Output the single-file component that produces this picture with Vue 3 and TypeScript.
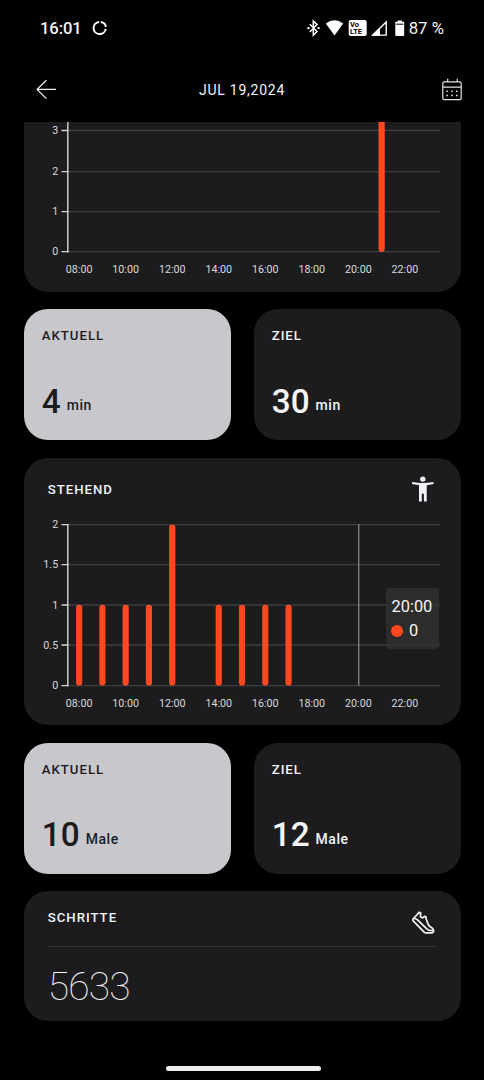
<script setup lang="ts">
interface Tick { label: string; y: number }
interface Bar { slot: number; top: number }
interface Plot { ticks: Tick[]; bars: Bar[]; axisTop: number; base: number; labelY: number }
interface Stat { label: string; value: string; unit: string; light: boolean }

const plotLeft = 43.8
const plotRight = 416
const slotWidth = 23.27

const slotX = (slot: number): number => plotLeft + slotWidth * (slot + 0.5) - 0.3

const hours: string[] = ['08:00', '10:00', '12:00', '14:00', '16:00', '18:00', '20:00', '22:00']

const training: Plot = {
  ticks: [
    { label: '3', y: 8.5 },
    { label: '2', y: 49.6 },
    { label: '1', y: 89.6 },
    { label: '0', y: 129.6 },
  ],
  bars: [{ slot: 13, top: -20 }],
  axisTop: -10,
  base: 130,
  labelY: 151.1,
}

const standing: Plot = {
  ticks: [
    { label: '2', y: 66.6 },
    { label: '1.5', y: 106.6 },
    { label: '1', y: 147 },
    { label: '0.5', y: 187 },
    { label: '0', y: 227.6 },
  ],
  bars: [
    { slot: 0, top: 146.8 },
    { slot: 1, top: 146.8 },
    { slot: 2, top: 146.8 },
    { slot: 3, top: 146.8 },
    { slot: 4, top: 66.4 },
    { slot: 6, top: 146.8 },
    { slot: 7, top: 146.8 },
    { slot: 8, top: 146.8 },
    { slot: 9, top: 146.8 },
  ],
  axisTop: 66,
  base: 227.6,
  labelY: 249,
}

const minutes: Stat[] = [
  { label: 'AKTUELL', value: '4', unit: 'min', light: true },
  { label: 'ZIEL', value: '30', unit: 'min', light: false },
]
const times: Stat[] = [
  { label: 'AKTUELL', value: '10', unit: 'Male', light: true },
  { label: 'ZIEL', value: '12', unit: 'Male', light: false },
]

const sections = [
  { id: 'training', title: '', plot: training, height: 169.5, stats: minutes },
  { id: 'standing', title: 'STEHEND', plot: standing, height: 267.5, stats: times },
]
</script>

<template>
  <div class="screen">
    <div class="status">
      <span class="clock">16:01</span>
      <svg class="ring" width="16" height="16" viewBox="0 0 16 16" fill="none" stroke="#fff" stroke-width="2">
        <path d="M8.8 1.9A6 6 0 0 1 13.9 6.9M13.7 8.9A6.1 6.1 0 1 1 7.2 1.9" />
      </svg>
      <svg class="system" width="100" height="18" viewBox="306 19 100 18">
        <path d="M309.8 24.2l7.2 7.4-3.7 3.6V21l3.7 3.6-7.2 7.4" fill="none" stroke="#fff" stroke-width="1.5" />
        <circle cx="308.4" cy="28.1" r="1.2" fill="#fff" />
        <circle cx="318.6" cy="28.1" r="1.2" fill="#fff" />
        <path d="M325.8 23.4Q334.5 17 343.2 23.4L334.5 35.4Z" fill="#fff" />
        <rect x="348.7" y="20" width="18" height="15.9" rx="2" fill="#fff" />
        <text x="350" y="27" class="volte">Vo</text>
        <text x="350" y="34" class="volte">LTE</text>
        <path d="M373 35.1L386.2 21.9V35.1Z" fill="none" stroke="#fff" stroke-width="1.4" />
        <path d="M371.3 35.8L380 27.2V35.8Z" fill="#fff" />
        <path d="M397.6 20.4h4.4v1.4h2.2v13.2q0 .9-.9.9h-7.1q-.9 0-.9-.9V21.8h2.3z" fill="#fff" />
        <path d="M396.2 24.2h7.2" stroke="#000" stroke-width="1" />
      </svg>
      <span class="battery">87 %</span>
    </div>

    <header class="topbar">
      <svg width="22" height="22" viewBox="0 0 22 22" fill="none" stroke="#f2f2f2" stroke-width="1.3">
        <path d="M11.4 1.2L2 10.4l9.4 9.2M2 10.4h19" stroke-linejoin="round" />
      </svg>
      <h1>JUL 19,2024</h1>
      <svg width="20" height="23" viewBox="0 0 20 23" fill="none" stroke="#e4e4e4" stroke-width="1.2">
        <rect x=".8" y="3.9" width="18.4" height="17.8" rx="1.4" />
        <path d="M.8 9.2h18.4M5.7.8v3M15.2.8v3" />
        <path d="M4.3 13.3h1.6M9.2 13.3h1.6M14 13.3h1.6M4.3 17.5h1.6M9.2 17.5h1.6M14 17.5h1.6" stroke-width="1.6" />
      </svg>
    </header>

    <main>
      <template v-for="section in sections" :key="section.id">
        <section class="card chart" :class="{ clipped: section.id === 'training' }">
          <div v-if="section.title" class="heading">
            <h2>{{ section.title }}</h2>
            <svg width="22" height="26" viewBox="0 0 22 26" fill="#f2f1f7">
              <circle cx="10.8" cy="3.1" r="2.7" />
              <path d="M.2 6Q10.8 8.2 21.4 6l.3 2.1-7 1.2v16.1h-2.8v-7.7H9.8v7.7H7V9.3L0 8.1z" />
            </svg>
          </div>
          <svg class="plot" width="437" :height="section.height" :viewBox="`0 0 437 ${section.height}`">
            <g v-for="tick in section.plot.ticks" :key="tick.label">
              <line :x1="plotLeft" :x2="plotRight" :y1="tick.y" :y2="tick.y" class="grid" />
              <line x1="37.5" :x2="plotLeft + 0.6" :y1="tick.y" :y2="tick.y" class="axis" />
              <text x="34.2" :y="tick.y + 3.8" text-anchor="end" class="tick">{{ tick.label }}</text>
            </g>
            <line :x1="plotLeft" :x2="plotLeft" :y1="section.plot.axisTop" :y2="section.plot.base + 0.6" class="axis" />
            <line v-if="section.title" x1="334.8" x2="334.8" y1="66" y2="227.6" class="pointer" />
            <rect
              v-for="bar in section.plot.bars"
              :key="bar.slot"
              :x="slotX(bar.slot) - 3.1"
              :y="bar.top"
              width="6.2"
              :height="section.plot.base - bar.top"
              rx="3.1"
              fill="#ff4720"
            />
            <text
              v-for="(hour, i) in hours"
              :key="hour"
              :x="slotX(i * 2)"
              :y="section.plot.labelY"
              text-anchor="middle"
              class="tick"
            >{{ hour }}</text>
          </svg>
          <div v-if="section.title" class="tooltip">
            <span>20:00</span>
            <span class="entry"><i></i>0</span>
          </div>
        </section>

        <div class="stats">
          <article v-for="stat in section.stats" :key="stat.label" class="stat" :class="{ light: stat.light }">
            <h3>{{ stat.label }}</h3>
            <p><b>{{ stat.value }}</b><span>{{ stat.unit }}</span></p>
          </article>
        </div>
      </template>

      <section class="card steps">
        <div class="steps-head">
          <h2>SCHRITTE</h2>
          <svg width="25" height="24" viewBox="0 0 25 24" fill="none" stroke="#f2f2f2" stroke-width="1.7" stroke-linejoin="round" stroke-linecap="round">
            <path d="M7.3 2.2L4.7 5 1.2 8.8Q.6 9.6 1.2 10.8L12.4 22.4q.8.5 1.6.5h5.4q2.2-.4 2.2-2.2-.2-1.8-1.8-3-3-1.6-3.7-3.6L13.9 8.3l.2-1.2-1.4-.8-2.2 1.6L8.4 6.8l.3-3.9z" />
            <path d="M2.3 8.5q2.5.3 3.8 1.9l8.7 8.5q1.5 1.3 3.3 1.6h3" />
          </svg>
        </div>
        <p class="count">5633</p>
      </section>
    </main>
    <div class="home"></div>
  </div>
</template>

<style>
html,
body {
  margin: 0;
  background: #000;
}
</style>

<style scoped>
.screen {
  width: 484px;
  height: 1080px;
  box-sizing: border-box;
  overflow: hidden;
  display: flex;
  flex-direction: column;
  background: #000;
  color: #f4f4f6;
  font-family: Roboto, "Liberation Sans", sans-serif;
}
h1, h2, h3, p {
  margin: 0;
}
svg {
  display: block;
  flex: none;
}
.status {
  display: flex;
  align-items: center;
  height: 57px;
  box-sizing: border-box;
  padding: 0 40px 1px;
}
.clock {
  padding-top: 2px;
  font-size: 16.6px;
  line-height: 20px;
  font-weight: 500;
  letter-spacing: -0.1px;
}
.ring {
  margin-left: 10px;
}
.system {
  margin-left: auto;
}
.battery {
  margin-left: 3px;
  font-size: 16.8px;
  line-height: 20px;
  white-space: nowrap;
}
.volte {
  font: 700 7.4px Roboto, sans-serif;
  fill: #000;
}
.topbar {
  display: flex;
  align-items: center;
  height: 65px;
  box-sizing: border-box;
  padding: 0 22px 0 35px;
}
.topbar h1 {
  flex: 1;
  padding-right: 15px;
  text-align: center;
  font-size: 14px;
  line-height: 18px;
  font-weight: 400;
  letter-spacing: 0.75px;
}
main {
  display: flex;
  flex-direction: column;
  gap: 17.5px;
  padding: 0 23.4px 0 23.8px;
}
.card {
  background: #1c1c1e;
  border-radius: 24px;
}
.chart {
  position: relative;
  overflow: hidden;
}
.clipped {
  border-radius: 0 0 24px 24px;
}
.heading {
  display: flex;
  justify-content: space-between;
  align-items: center;
  height: 63px;
  margin-bottom: -63px;
  padding: 0 27px 0 24px;
}
.heading h2 {
  padding-top: 1px;
}
h2, h3 {
  font-size: 13.2px;
  line-height: 16px;
  font-weight: 500;
  letter-spacing: 0.98px;
}
.grid {
  stroke: #3e3e40;
  stroke-width: 1.4;
}
.axis {
  stroke: #d4d4d6;
  stroke-width: 1.4;
}
.pointer {
  stroke: #a5a5a7;
  stroke-width: 1;
}
.tick {
  font: 400 10.7px Roboto, sans-serif;
  fill: #dadadc;
}
.tooltip {
  position: absolute;
  left: 361.9px;
  top: 130.5px;
  width: 53.3px;
  height: 61px;
  box-sizing: border-box;
  padding: 8.5px 0 0 5.8px;
  border-radius: 4px;
  background: rgba(50, 50, 50, 0.75);
  font-size: 16.4px;
  line-height: 20px;
  display: flex;
  flex-direction: column;
  gap: 4px;
}
.entry {
  display: flex;
  align-items: center;
}
.entry i {
  width: 12px;
  height: 12px;
  margin-right: 5.5px;
  border-radius: 50%;
  background: #ff4720;
}
.stats {
  display: grid;
  grid-template-columns: 1fr 1fr;
  gap: 23px;
}
.stat {
  height: 131px;
  box-sizing: border-box;
  padding: 19px 18px 0;
  border-radius: 24px;
  background: #1c1c1e;
}
.light {
  background: #c8c7cc;
  color: #1c1c1e;
}
.stat p {
  display: flex;
  align-items: flex-end;
  margin-top: 37.5px;
}
.stat b {
  font-size: 33.3px;
  line-height: 40px;
  font-weight: 500;
}
.stat span {
  margin: 0 0 6.5px 6px;
  font-size: 14px;
  line-height: 20px;
  font-weight: 500;
  letter-spacing: 0.55px;
}
.steps {
  height: 130px;
  box-sizing: border-box;
  padding: 0 24px;
}
.steps-head {
  display: flex;
  justify-content: space-between;
  height: 56px;
  box-sizing: border-box;
  padding-top: 19px;
  border-bottom: 1px solid #343436;
}
.count {
  margin-top: 17px;
  font-size: 39px;
  line-height: 46px;
  font-weight: 100;
  letter-spacing: -0.9px;
}
.home {
  width: 155px;
  height: 5px;
  margin: auto auto 9px 166px;
  border-radius: 3px;
  background: #ececec;
}
</style>
